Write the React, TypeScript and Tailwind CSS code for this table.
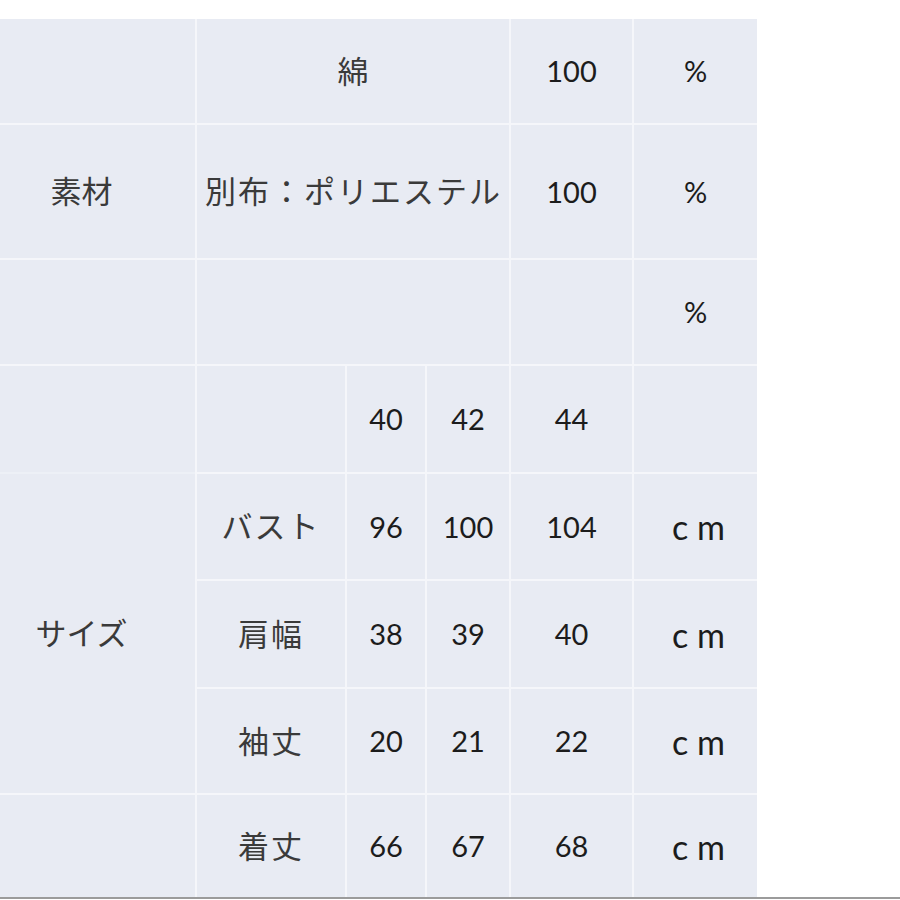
const CELL = 'flex items-center justify-center bg-[#e8ebf3]'
const JA = 'text-[31px] text-[#3a3a3a]'
const NUM = 'text-[29px] text-[#1c1c1c]'

const sizeRows = [
  { label: 'バスト', values: ['96', '100', '104'] },
  { label: '肩幅', values: ['38', '39', '40'] },
  { label: '袖丈', values: ['20', '21', '22'] },
  { label: '着丈', values: ['66', '67', '68'] }
]

function Cell({ className = '', children }: { className?: string; children?: React.ReactNode }) {
  return <div className={`${CELL} ${className}`}>{children}</div>
}

function Unit({ children }: { children: React.ReactNode }) {
  return <span className="pl-[6px] text-[34px] text-[#1c1c1c] [word-spacing:0px]">{children}</span>
}

export default function App() {
  return (
    <div
      className="flex h-[900px] w-[900px] flex-col bg-white"
      style={{ fontFamily: 'Lato, "Noto Sans CJK JP", sans-serif' }}
    >
      <div className="h-[19px]" />
      <div
        className="grid w-[757px] gap-[2px] bg-[#f5f6fa]"
        style={{
          gridTemplateColumns: '195px 148px 78px 82px 121px 123px',
          gridTemplateRows: '104px 133px 104px 106px 105px 106px 104px 102px'
        }}
      >
        {/* 素材 */}
        <Cell className="col-start-1 row-start-1" />
        <Cell className="col-span-3 col-start-2 row-start-1">
          <span className={JA}>綿</span>
        </Cell>
        <Cell className="col-start-5 row-start-1">
          <span className={NUM}>100</span>
        </Cell>
        <Cell className="col-start-6 row-start-1">
          <span className={NUM}>%</span>
        </Cell>

        <Cell className="col-start-1 row-start-2 pr-[32px]">
          <span className={JA}>素材</span>
        </Cell>
        <Cell className="col-span-3 col-start-2 row-start-2 justify-start pl-[8px]">
          <span className={`${JA} tracking-[2px]`}>別布：ポリエステル</span>
        </Cell>
        <Cell className="col-start-5 row-start-2">
          <span className={NUM}>100</span>
        </Cell>
        <Cell className="col-start-6 row-start-2">
          <span className={NUM}>%</span>
        </Cell>

        <Cell className="col-start-1 row-start-3" />
        <Cell className="col-span-3 col-start-2 row-start-3" />
        <Cell className="col-start-5 row-start-3" />
        <Cell className="col-start-6 row-start-3">
          <span className={NUM}>%</span>
        </Cell>

        {/* サイズ */}
        <div className="col-start-1 row-span-4 row-start-4 flex flex-col bg-[#e8ebf3]">
          <div className="h-[106px]" />
          <div className="h-[2px] bg-[#edf0f6]" />
          <div className="flex flex-1 items-center justify-center pr-[32px]">
            <span className={JA}>サイズ</span>
          </div>
        </div>
        <Cell className="col-start-2 row-start-4" />
        <Cell className="col-start-3 row-start-4">
          <span className={NUM}>40</span>
        </Cell>
        <Cell className="col-start-4 row-start-4">
          <span className={NUM}>42</span>
        </Cell>
        <Cell className="col-start-5 row-start-4">
          <span className={NUM}>44</span>
        </Cell>
        <Cell className="col-start-6 row-start-4" />

        <Cell className="col-start-1 row-start-8" />

        {sizeRows.map((row) => (
          <div key={row.label} className="contents">
            <Cell className="col-start-2">
              <span className={`${JA} tracking-[2px]`}>{row.label}</span>
            </Cell>
            {row.values.map((v, i) => (
              <Cell key={i}>
                <span className={NUM}>{v}</span>
              </Cell>
            ))}
            <Cell>
              <Unit>c m</Unit>
            </Cell>
          </div>
        ))}
      </div>
      <div className="h-[2px] w-full bg-[#9b9b9b]" />
    </div>
  )
}
